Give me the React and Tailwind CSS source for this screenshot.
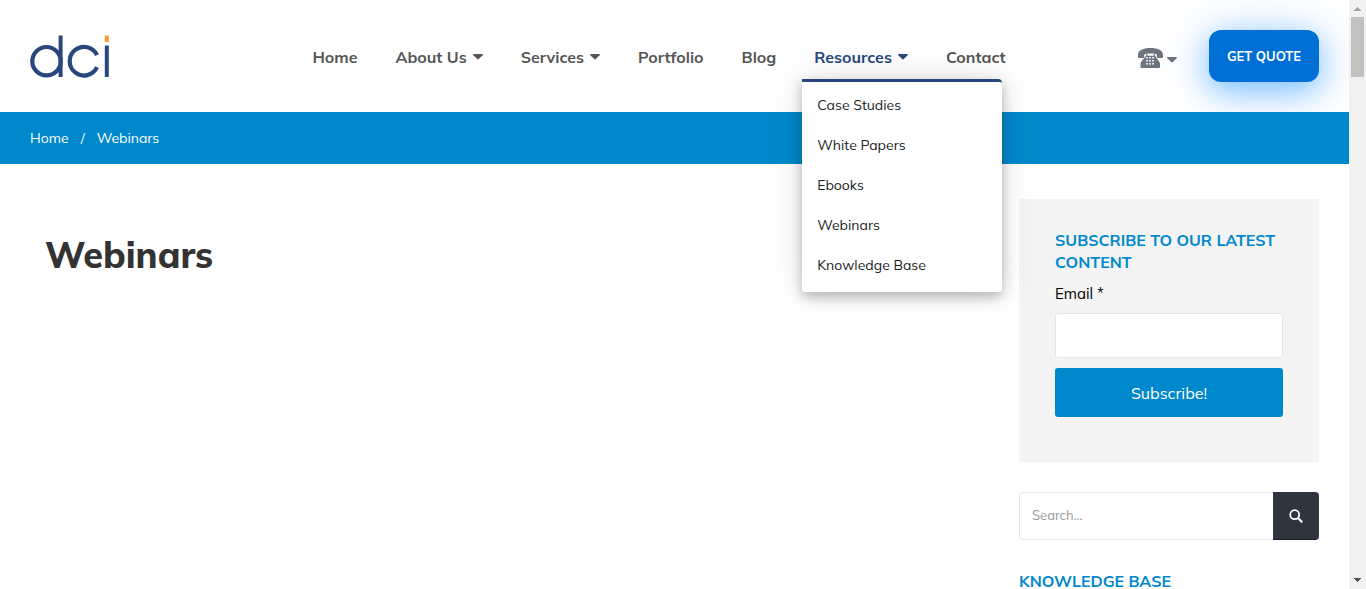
import React from 'react';

const navItems = [
  { label: 'Home' },
  { label: 'About Us', caret: true },
  { label: 'Services', caret: true },
  { label: 'Portfolio' },
  { label: 'Blog' },
  {
    label: 'Resources',
    caret: true,
    menu: ['Case Studies', 'White Papers', 'Ebooks', 'Webinars', 'Knowledge Base'],
  },
  { label: 'Contact' },
];

function Caret() {
  return (
    <svg viewBox="0 0 10 6" className="h-1.5 w-2.5" fill="currentColor" aria-hidden="true">
      <path d="M.8 0h8.400c.7 0 1 .8.500 1.300L5.500 5.300c-.3.300-.7.300-1 0L.3 1.300C-.2.800.1 0 .8 0z" />
    </svg>
  );
}

function Logo() {
  return (
    <a href="#" aria-label="dci" className="shrink-0 pt-0.5">
      <svg viewBox="0 0 80 44" className="h-11 w-20" fill="none" stroke="#27477d" strokeWidth="4.200">
        <circle cx="16.500" cy="26.200" r="14.200" />
        <path d="M30.600 0.500v41.500" strokeWidth="4" />
        <path d="M67 20.200A14.300 14.300 0 1 0 67 32.200" />
        <path d="M76.800 10.500v31.500" strokeWidth="4" />
        <path d="M76.800 0.500v6.500" stroke="#f99d2f" strokeWidth="4" />
      </svg>
    </a>
  );
}

function Phone() {
  return (
    <svg viewBox="0 0 25 21" className="h-[21px] w-[25px]" aria-hidden="true">
      <path
        fill="#6c757d"
        d="M0 9V7C0 2.500 5 0 12.500 0S25 2.500 25 7v2c0 .6-.4 1-1 1h-4c-.7 0-1.200-.4-1.200-1V6.500C17 5.700 15 5.400 12.500 5.400S8 5.700 6.200 6.500V9c0 .6-.5 1-1.200 1H1C.4 10 0 9.600 0 9z"
      />
      <path
        fill="#6c757d"
        d="M8 6.500h1.500v1.200h6V6.500H17v1.200l4.300 6c.5.800.7 1.400.7 2.300v3c0 .6-.4 1-1 1H3.500c-.6 0-1-.4-1-1v-3c0-.9.3-1.500.8-2.300L8 7.700z"
      />
      <g fill="#fff" fillOpacity=".8">
        {[9, 12, 15].map((y) =>
          [8, 11, 14].map((x) => <rect key={`${x}-${y}`} x={x} y={y} width="2" height="1.600" />)
        )}
      </g>
    </svg>
  );
}

function NavItem({ item }) {
  const open = Boolean(item.menu);
  return (
    <li className="relative">
      <a
        href="#"
        className={`flex h-11 items-center gap-1.5 px-3 text-base font-bold whitespace-nowrap ${open ? 'text-[#27477d]' : 'text-[#555]'}`}
      >
        {item.label}
        {item.caret && <Caret />}
      </a>
      {open && (
        <ul className="absolute top-full left-0 z-10 w-[200px] rounded-b-[3px] rounded-tr-[4px] border-t-3 border-[#27477d] bg-white pt-[3px] pb-[7px] shadow-[0_5px_12px_rgba(0,0,0,0.25),0_0_36px_rgba(0,0,0,0.12)]">
          {item.menu.map((label) => (
            <li key={label}>
              <a href="#" className="flex h-10 items-center px-[15px] text-sm text-[#1c1c1c]">
                {label}
              </a>
            </li>
          ))}
        </ul>
      )}
    </li>
  );
}

function Header() {
  return (
    <header className="flex h-28 items-center bg-white px-[30px]">
      <Logo />
      <nav className="mx-auto pt-0.5 pl-[70px]">
        <ul className="flex gap-3.5">
          {navItems.map((item) => (
            <NavItem key={item.label} item={item} />
          ))}
        </ul>
      </nav>
      <button type="button" aria-label="Phone numbers" className="mr-8 flex items-center gap-1 pt-1 text-[#6c757d]">
        <Phone />
        <span className="pt-1">
          <Caret />
        </span>
      </button>
      <a
        href="#"
        className="flex h-[52px] w-[110px] items-center justify-center rounded-xl bg-[#006fd6] pt-px text-[13px] font-bold text-white shadow-[0_8px_32px_rgba(0,132,255,0.5),0_4px_64px_rgba(0,132,255,0.15)]"
      >
        GET QUOTE
      </a>
    </header>
  );
}

function Sidebar() {
  return (
    <aside className="w-[300px] shrink-0">
      <form className="bg-[#f4f4f4] px-9 pt-[30px] pb-[45px]" onSubmit={(e) => e.preventDefault()}>
        <h2 className="text-base leading-[22px] font-bold text-[#0088cc]">SUBSCRIBE TO OUR LATEST CONTENT</h2>
        <label htmlFor="email" className="mt-2.5 block text-[15px] leading-[22px] text-black">
          Email *
        </label>
        <input
          id="email"
          type="email"
          className="mt-2 block h-[45px] w-full rounded-[3px] border border-[#e5e7e9] bg-white px-3"
        />
        <button type="submit" className="mt-2.5 block h-[49px] w-full rounded-[3px] bg-[#0088cc] text-base text-white">
          Subscribe!
        </button>
      </form>
      <form className="mt-[30px] flex h-12" onSubmit={(e) => e.preventDefault()}>
        <input
          type="search"
          aria-label="Search"
          placeholder="Search..."
          className="min-w-0 flex-1 rounded-l-[4px] border border-r-0 border-[#e5e7e9] px-3 text-[13px] placeholder:text-[#999]"
        />
        <button
          type="submit"
          aria-label="Search"
          className="flex w-[46px] items-center justify-center rounded-r-[4px] border-b border-[#191e26] bg-[#2e353e]"
        >
          <svg viewBox="0 0 14 14" className="size-3.5" fill="none" stroke="#fff" strokeWidth="1.800" aria-hidden="true">
            <circle cx="5.700" cy="5.700" r="4.500" />
            <path d="M9 9l4.300 4.300" strokeWidth="2.200" />
          </svg>
        </button>
      </form>
      <h2 className="mt-[30px] text-base leading-[22px] font-bold text-[#0088cc]">KNOWLEDGE BASE</h2>
    </aside>
  );
}

function ScrollRail() {
  return (
    <div aria-hidden="true" className="flex w-[17px] shrink-0 flex-col items-center bg-[#f1f1f1]">
      <svg viewBox="0 0 17 17" className="size-[17px]" fill="#a3a3a3">
        <path d="M8 7h1v1h1v1h1v1h1v1H5v-1h1V9h1V8h1z" />
      </svg>
      <div className="h-[60px] w-[13px] bg-[#c1c1c1]" />
      <svg viewBox="0 0 17 17" className="mt-auto size-[17px]" fill="#505050">
        <path d="M5 6h7v1h-1v1h-1v1H9v1H8V9H7V8H6V7H5z" />
      </svg>
    </div>
  );
}

export default function App() {
  return (
    <div className="flex h-screen overflow-hidden bg-white font-['Mulish','Open_Sans',sans-serif]">
      <div className="min-w-0 flex-1 overflow-hidden">
        <Header />
        <div className="flex h-[52px] items-center bg-[#0088cc] px-[30px] text-sm text-white">
          <a href="#">Home</a>
          <span className="px-3 text-sm">/</span>
          <span>Webinars</span>
        </div>
        <div className="flex justify-between pt-[35px] pr-[30px] pl-[45px]">
          <main>
            <h1 className="pt-8 text-4xl leading-12 font-extrabold text-[#333]">Webinars</h1>
          </main>
          <Sidebar />
        </div>
      </div>
      <ScrollRail />
    </div>
  );
}
